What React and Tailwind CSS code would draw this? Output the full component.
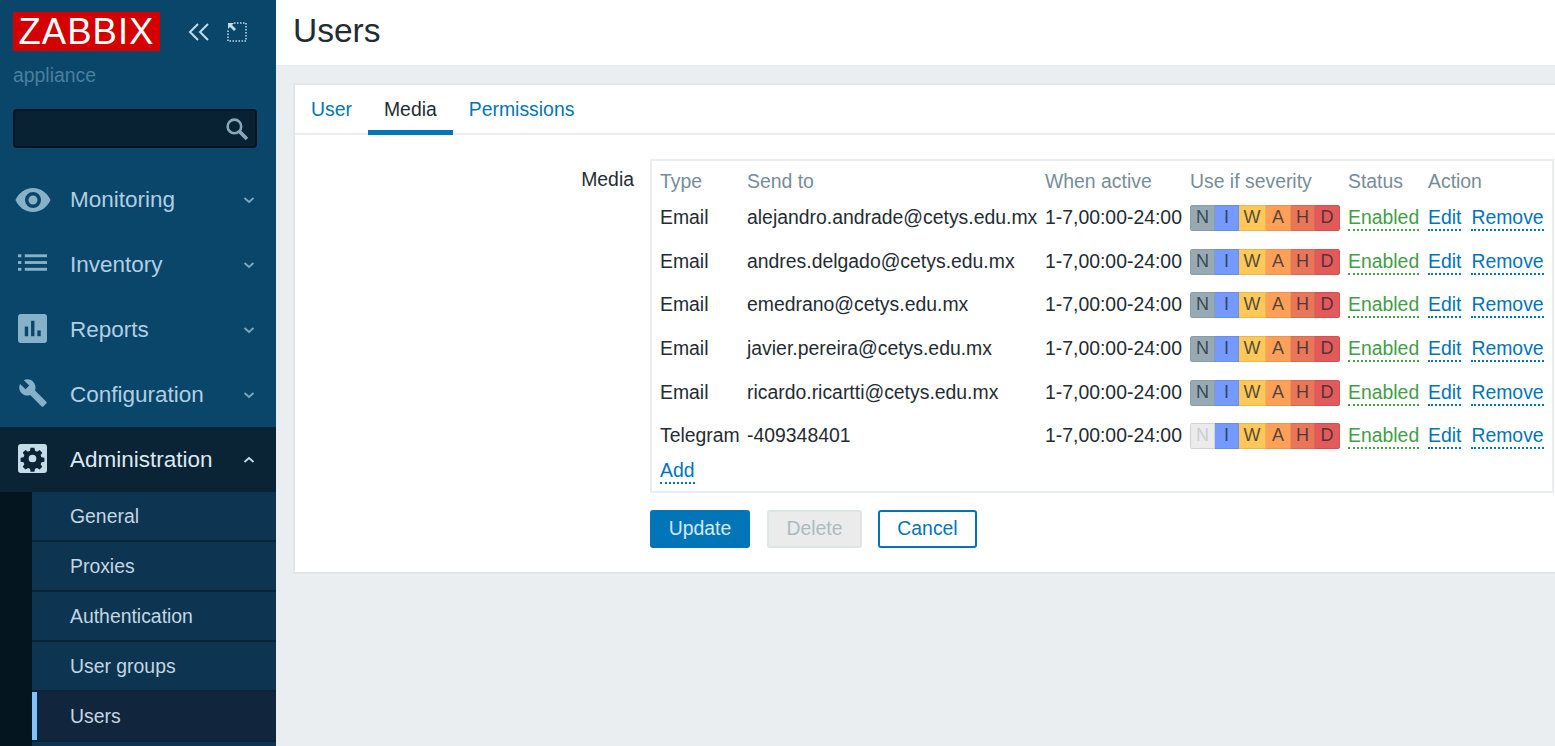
import React from "react";

const font = { fontFamily: '"Liberation Sans", Arial, sans-serif' };

function Chevron({ up }) {
  return (
    <svg className={up ? "w-3 h-3 text-[#c4dbe8]" : "w-3 h-3 text-[#7ea6bf]"} viewBox="0 0 12 12" fill="none" stroke="currentColor" strokeWidth="1.8">
      <path d={up ? "M1.5 8l4.5-4 4.5 4" : "M1.5 4l4.5 4 4.5-4"} />
    </svg>
  );
}

const EyeIcon = () => (
  <svg className="w-9 h-7" viewBox="0 0 36 28" fill="currentColor">
    <path fillRule="evenodd" d="M18 2C10 2 3.500 7 0.500 14c3 7 9.500 12 17.500 12s14.500-5 17.500-12C32.500 7 26 2 18 2zm0 20a8 8 0 1 1 0-16 8 8 0 0 1 0 16zm0-12.500a4.500 4.500 0 1 0 0 9 4.500 4.500 0 0 0 0-9z" />
  </svg>
);

const ListIcon = () => (
  <svg className="w-[29px] h-[18px] ml-[3px] -mt-[4px]" viewBox="0 0 30 18" fill="currentColor">
    <rect x="0" y="0" width="3.500" height="3" />
    <rect x="0" y="7" width="3.500" height="3" />
    <rect x="0" y="14" width="3.500" height="3" />
    <rect x="7" y="0" width="23" height="3" />
    <rect x="7" y="7" width="23" height="3" />
    <rect x="7" y="14" width="23" height="3" />
  </svg>
);

const ReportIcon = () => (
  <svg className="w-[29px] h-[29px] ml-[3px] -mt-[3px]" viewBox="0 0 30 30">
    <rect width="30" height="30" rx="3" fill="currentColor" />
    <rect x="7" y="13" width="3.500" height="10" fill="#0a466a" />
    <rect x="13.500" y="7" width="3.500" height="16" fill="#0a466a" />
    <rect x="20" y="17" width="3.500" height="6" fill="#0a466a" />
  </svg>
);

const WrenchIcon = () => (
  <svg className="w-[30px] h-[30px] ml-[3px] -mt-[3px]" viewBox="0 0 24 24" fill="currentColor">
    <path d="M22.700 19l-9.100-9.100c.9-2.300.4-5-1.500-6.900-2-2-5-2.400-7.400-1.300L9 6 6 9 1.600 4.700C.4 7.100.9 10.100 2.900 12.100c1.900 1.900 4.600 2.400 6.900 1.500l9.100 9.100c.4.400 1 .4 1.400 0l2.300-2.300c.5-.4.500-1.100.1-1.400z" />
  </svg>
);

const GearIcon = () => (
  <svg className="w-[29px] h-[29px] -mt-[3px]" viewBox="0 0 30 30">
    <rect width="30" height="30" rx="3" fill="#c4dbe8" />
    <path
      fill="#0a2436"
      fillRule="evenodd"
      d="M13 4h4l.6 3 2.100.9 2.600-1.700 2.800 2.800-1.700 2.600.9 2.100 3 .6v4l-3 .6-.9 2.100 1.700 2.600-2.800 2.800-2.600-1.700-2.100.9-.6 3h-4l-.6-3-2.100-.9-2.600 1.700-2.800-2.800 1.700-2.600-.9-2.100-3-.6v-4l3-.6.9-2.100-1.700-2.600 2.800-2.800 2.600 1.700 2.100-.9zM15 11a4 4 0 1 0 0 8 4 4 0 0 0 0-8z"
    />
  </svg>
);

function NavItem({ icon, label, active }) {
  return (
    <div className={active ? "h-[65px] flex items-center bg-[#0a2436] text-[#dce9f1]" : "h-[65px] flex items-center text-[#b0cfe2]"}>
      <div className={active ? "w-[70px] pl-[18px] shrink-0" : "w-[70px] pl-[15px] shrink-0 text-[#87b0c9]"}>{icon}</div>
      <span className="text-[22.500px] flex-1">{label}</span>
      <div className="pr-[21px]">
        <Chevron up={active} />
      </div>
    </div>
  );
}

function SubItem({ label, active }) {
  return (
    <div className={active ? "h-[50px] flex items-center border-b-2 border-[#0a2436] bg-[#11253c] relative text-[#c4d6e0] text-[19.400px] pl-[38px] pt-[2px]" : "h-[50px] flex items-center border-b-2 border-[#0a2436] bg-[#0d3450] text-[#c4d6e0] text-[19.400px] pl-[38px] pt-[2px]"}>
      {active && <div className="absolute left-0 top-0 bottom-0 w-[5px] bg-[#7fc4ff]" />}
      {label}
    </div>
  );
}

function Sidebar() {
  return (
    <aside className="w-[276px] shrink-0 bg-[#0a466a] flex flex-col h-full overflow-hidden">
      <div className="flex items-center pl-[13px] pt-[12px] shrink-0">
        <div className="w-[147px] h-[39px] bg-[#d40000] text-white text-[36.500px] leading-[39px] text-center tracking-[1px]">ZABBIX</div>
        <svg className="ml-[27px] w-6 h-5 text-[#c4dbe8]" viewBox="0 0 24 20" fill="none" stroke="currentColor" strokeWidth="2">
          <path d="M11 2L3 10l8 8M21 2l-8 8 8 8" />
        </svg>
        <svg className="ml-[16px] w-5 h-5 text-[#c4dbe8]" viewBox="0 0 20 20" fill="none">
          <path d="M7 1h12v18H1V7" stroke="currentColor" strokeWidth="1.500" strokeDasharray="1.500 1.500" />
          <path d="M1 1h6L5 3l4 4-2 2-4-4-2 2z" fill="currentColor" />
        </svg>
      </div>
      <div className="pl-[13px] mt-[12px] h-[24px] leading-[24px] text-[19.400px] text-[#4a7f9f] shrink-0">appliance</div>
      <div className="ml-[13px] w-[244px] mt-[22px] h-[39px] bg-[#082233] border-2 border-[#04151f] rounded-[4px] flex items-center justify-end pr-[6px] shrink-0">
        <svg className="w-[25px] h-[25px] text-[#86a7b8]" viewBox="0 0 24 24" fill="none" stroke="currentColor">
          <circle cx="10" cy="10" r="6.500" strokeWidth="2.500" />
          <path d="M15 15l7 7" strokeWidth="3.500" />
        </svg>
      </div>
      <nav className="mt-[19px] shrink-0">
        <NavItem icon={<EyeIcon />} label="Monitoring" />
        <NavItem icon={<ListIcon />} label="Inventory" />
        <NavItem icon={<ReportIcon />} label="Reports" />
        <NavItem icon={<WrenchIcon />} label="Configuration" />
        <NavItem icon={<GearIcon />} label="Administration" active />
      </nav>
      <div className="shrink-0 pl-[32px] bg-[#04151f]">
        <SubItem label="General" />
        <SubItem label="Proxies" />
        <SubItem label="Authentication" />
        <SubItem label="User groups" />
        <SubItem label="Users" active />
        <SubItem label="" />
      </div>
    </aside>
  );
}

const severities = [
  { key: "N", w: "w-[25px]", on: "bg-[#97aab3] border-[#8a9ca5]" },
  { key: "I", w: "w-[24px]", on: "bg-[#7499ff] border-[#6a8cea]" },
  { key: "W", w: "w-[27px]", on: "bg-[#ffc859] border-[#ebb84f]" },
  { key: "A", w: "w-[25px]", on: "bg-[#ffa059] border-[#eb9352]" },
  { key: "H", w: "w-[24px]", on: "bg-[#e97659] border-[#d66c52]" },
  { key: "D", w: "w-[25px]", on: "bg-[#e45959] border-[#d15252]" },
];

function Severity({ noNotClassified }) {
  return (
    <div className="flex h-[26px] w-[150px] mt-[1px] rounded-[3px] overflow-hidden text-[18px] leading-[23px]">
      {severities.map((s) => {
        const off = noNotClassified && s.key === "N";
        return (
          <div
            key={s.key}
            className={`${s.w} border-y border-r first:border-l text-center ${off ? "bg-[#ebebeb] border-[#d2d2d2] text-[#c5d0d6]" : `${s.on} text-[#1f2c33]/80`}`}
          >
            {s.key}
          </div>
        );
      })}
    </div>
  );
}

const media = [
  { type: "Email", to: "alejandro.andrade@cetys.edu.mx" },
  { type: "Email", to: "andres.delgado@cetys.edu.mx" },
  { type: "Email", to: "emedrano@cetys.edu.mx" },
  { type: "Email", to: "javier.pereira@cetys.edu.mx" },
  { type: "Email", to: "ricardo.ricartti@cetys.edu.mx" },
  { type: "Telegram", to: "-409348401", off: true },
];

const grid = "grid grid-cols-[87px_298px_145px_158px_80px_1fr] items-center";
const link = "inline-block leading-[24px] text-[#0275b8] border-b-2 border-dotted border-[#0275b8]";

function MediaTable() {
  return (
    <div className="flex-1 border-2 border-[#ebeef0] pl-[8px] h-[334px] pt-[6px]">
      <div className={`${grid} h-[26px] mb-[3px] text-[#768d99]`}>
        <div>Type</div>
        <div>Send to</div>
        <div>When active</div>
        <div>Use if severity</div>
        <div>Status</div>
        <div>Action</div>
      </div>
      {media.map((m, i) => (
        <div key={i} className={`${grid} h-[43.600px]`}>
          <div>{m.type}</div>
          <div>{m.to}</div>
          <div>1-7,00:00-24:00</div>
          <Severity noNotClassified={m.off} />
          <div className="flex pt-[1px]">
            <span className="inline-block leading-[24px] text-[#429e47] border-b-2 border-dotted border-[#429e47]">Enabled</span>
          </div>
          <div className="flex gap-[10px] pt-[1px]">
            <span className={link}>Edit</span>
            <span className={link}>Remove</span>
          </div>
        </div>
      ))}
      <div className="-mt-[2px]">
        <span className={link}>Add</span>
      </div>
    </div>
  );
}

function UserForm() {
  return (
    <section className="mt-[17px] ml-[17px] bg-white border-2 border-[#e3e7ea] border-r-0 h-[491px]">
      <div className="flex h-[50px] border-b-2 border-[#ebeef0] pl-[16px] text-[#0275b8]">
        <div className="pt-[10px]">User</div>
        <div className="ml-[16px] px-[16px] pt-[10px] h-[50px] border-b-[5px] border-[#0275b8] text-[#1f2c33]">Media</div>
        <div className="ml-[16px] pt-[10px]">Permissions</div>
      </div>
      <div className="flex pt-[24px] pr-[1px]">
        <div className="w-[355px] pr-[16px] pt-[6px] text-right shrink-0">Media</div>
        <div className="flex-1">
          <MediaTable />
          <div className="flex mt-[17px]">
            <button className="w-[100px] h-[38px] bg-[#0275b8] rounded-[3px] text-[#d5e9f5]">Update</button>
            <button className="ml-[17px] w-[95px] h-[38px] bg-[#ebebeb] border-2 border-[#dfe4e7] rounded-[3px] text-[#acbbc2]">Delete</button>
            <button className="ml-[16px] w-[99px] h-[38px] bg-white border-2 border-[#0275b8] rounded-[3px] text-[#0275b8]">Cancel</button>
          </div>
        </div>
      </div>
    </section>
  );
}

export default function App() {
  return (
    <div className="flex h-screen overflow-hidden text-[19.400px] text-[#1f2c33]" style={font}>
      <Sidebar />
      <main className="flex-1 bg-[#ebeef0] min-w-0">
        <header className="h-[66px] bg-white border-b border-[#e5e9eb] pl-[17px] flex items-center text-[33.500px] pb-[2px]">Users</header>
        <UserForm />
      </main>
    </div>
  );
}
